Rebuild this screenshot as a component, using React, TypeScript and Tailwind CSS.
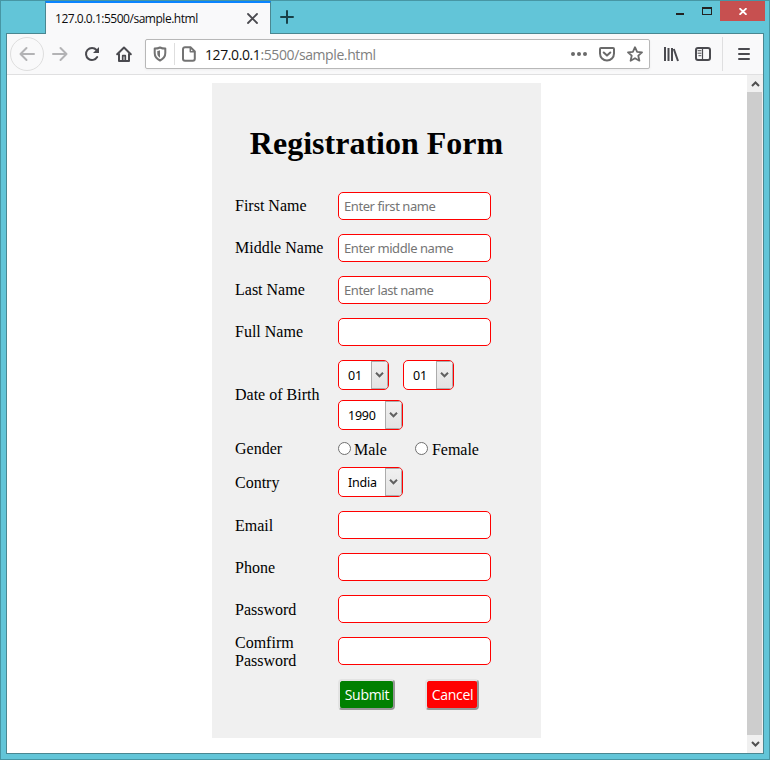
import type { ReactNode } from "react";

const UI = "font-['Open_Sans','Noto_Sans',sans-serif]";

function Row({ label, height = "h-[42px]", shift = "", children }: { label: string; height?: string; shift?: string; children: ReactNode }) {
  return (
    <div className={`flex items-center ${height}`}>
      <div className={`w-[103px] shrink-0 pr-2 leading-[18px] ${shift}`}>{label}</div>
      {children}
    </div>
  );
}

function Field({ placeholder = "" }: { placeholder?: string }) {
  return (
    <input
      placeholder={placeholder}
      className="h-7 w-[153px] rounded-[5px] border border-[#ff0000] bg-white px-[5px] font-['Noto_Sans',sans-serif] text-[13px] tracking-[-0.430px] outline-none placeholder:text-[#757575]"
    />
  );
}

function Select({ value, width }: { value: string; width: string }) {
  return (
    <div className={`flex h-[30px] ${width} items-stretch overflow-hidden rounded-[5px] border border-[#ff0000] bg-white text-black`}>
      <span className="flex-1 pl-[9px] pt-px font-['Noto_Sans',sans-serif] text-[12.5px] leading-[28px] tracking-[-0.25px]">{value}</span>
      <span className="flex w-[17px] items-center justify-center border border-[#acacac] bg-linear-to-b from-[#f0f0f0] to-[#e3e3e3]">
        <svg width="9" height="6" viewBox="0 0 9 6" fill="none" stroke="#606060" strokeWidth="2"><path d="M1 .8 4.5 4.3 8 .8" /></svg>
      </span>
    </div>
  );
}

function Radio({ label, gap }: { label: string; gap: string }) {
  return (
    <label className="flex items-center">
      <span className={`mb-px ${gap} block size-[13px] rounded-full border border-[#707070] bg-white`} />
      <span className="mt-px leading-[18px]">{label}</span>
    </label>
  );
}

const line = { fill: "none", stroke: "#4a4a4f", strokeWidth: 2, strokeLinecap: "round", strokeLinejoin: "round" } as const;

function Toolbar() {
  return (
    <div className="flex h-[41px] shrink-0 items-center border-b border-[#e0e0e1] bg-[#f9f9fa]">
      <div className="ml-[3px] flex size-[34px] items-center justify-center rounded-full border border-[#dedede]">
        <svg width="16" height="16" viewBox="0 0 16 16" {...line} stroke="#b3b3b5"><path d="M15 8H1.5M7.5 2 1.5 8l6 6" /></svg>
      </div>
      <svg className="ml-2" width="16" height="16" viewBox="0 0 16 16" {...line} stroke="#b3b3b5"><path d="M1 8h13.5M8.500 2l6 6-6 6" /></svg>
      <svg className="ml-4" width="16" height="16" viewBox="0 0 16 16" {...line}><path d="M13.200 11A6 6 0 1 1 12.500 4" /><path d="M15 1v6H9z" fill="#4a4a4f" stroke="none" /></svg>
      <svg className="ml-4" width="16" height="16" viewBox="0 0 16 16" {...line}><path d="M1.200 8.200 8 1.500l6.800 6.700M3 7.500V15h10V7.500" /><path d="M6.700 14V9.700h2.600V14" strokeWidth="1.700" /></svg>
      <div className="ml-[13px] flex h-[30px] w-[505px] items-center rounded-[2px] border border-[#b8b8b8] bg-white shadow-[0_1px_3px_#0000000d]">
        <svg className="ml-[6px]" width="16" height="16" viewBox="0 0 16 16" fill="none" stroke="#737373" strokeWidth="2" strokeLinejoin="round"><path d="M8 1.500c1.700.8 3.500 1.100 5.300 1.100v4.400c0 3.600-1.600 5.800-5.300 7.500-3.700-1.700-5.300-3.900-5.300-7.500v-4.400C4.500 2.600 6.300 2.300 8 1.500Z" /><path d="M8 4.300C7.300 4.800 6.400 5 5.300 5.100v2.100c0 2 .8 3.400 2.700 4.500Z" fill="#737373" stroke="none" /></svg>
        <span className="ml-[6px] h-[22px] w-px bg-[#dedede]" />
        <svg className="ml-[6px]" width="16" height="16" viewBox="0 0 16 16" {...line} stroke="#737373"><path d="M4 1.200h5.500l4.300 4.300v7.300a2 2 0 0 1-2 2H4a2 2 0 0 1-2-2V3.200a2 2 0 0 1 2-2Z" /><path d="M9.300 1.500v4.200h4.200" strokeWidth="1.500" /></svg>
        <span className={`ml-[8px] mt-[2px] ${UI} text-[14px] leading-5 tracking-[-0.400px] text-[#808080]`}><span className="text-[#111]">127.0.0.1</span>:5500/sample.html</span>
        <svg className="ml-auto" width="16" height="16" viewBox="0 0 16 16" fill="#6a6a6a"><circle cx="2" cy="8" r="2" /><circle cx="8" cy="8" r="2" /><circle cx="14" cy="8" r="2" /></svg>
        <svg className="ml-3" width="16" height="16" viewBox="0 0 16 16" {...line} stroke="#6a6a6a"><path d="M2 2h12a1 1 0 0 1 1 1v4.500a7 7 0 0 1-14 0V3a1 1 0 0 1 1-1Z" /><path d="M4.700 6.500 8 9.600l3.300-3.100" /></svg>
        <svg className="ml-3 mr-[6px]" width="16" height="16" viewBox="0 0 16 16" {...line} stroke="#6a6a6a" strokeWidth="1.800"><path d="m8 1.200 2.100 4.600 4.900.5-3.700 3.400 1.100 5L8 12.200l-4.400 2.500 1.100-5L1 6.300l4.900-.5Z" /></svg>
      </div>
      <svg className="ml-[13px]" width="16" height="16" viewBox="0 0 16 16" {...line}><path d="M2 1v14M5.500 2v13M9 2v13M10.800 3l4.200 12" strokeLinecap="butt" /></svg>
      <svg className="ml-4" width="16" height="16" viewBox="0 0 16 16" {...line}><rect x="1" y="2" width="14" height="12" rx="2" /><path d="M7.500 2v12" strokeWidth="1.200" /><path d="M3 4.700h3M3 7.200h3M3.800 9.700H6" strokeWidth="1" /></svg>
      <span className="ml-[11px] h-[34px] w-px bg-[#dfdfe0]" />
      <svg className="ml-[13px]" width="16" height="16" viewBox="0 0 16 16" {...line}><path d="M3 3h10M3 8h10M3 13h10" /></svg>
    </div>
  );
}

export default function App() {
  return (
    <div className="flex h-[760px] w-[770px] flex-col overflow-hidden border border-[#4796a4] bg-[#62c5d8]">
      <div className="flex h-8 shrink-0 items-start pl-11">
        <div className={`z-10 flex h-[33px] w-[226px] items-center justify-between border-x border-t-2 border-x-[#4a8791] border-t-[#0a84ff] bg-[#f9f9fa] pl-[9px] pr-3 ${UI} text-xs tracking-[-0.480px] text-[#0c0c0d]`}>
          <span className="mt-px">127.0.0.1:5500/sample.html</span>
          <svg width="11" height="11" viewBox="0 0 11 11" stroke="#4a4a4f" strokeWidth="1.800" strokeLinecap="round"><path d="m1 1 9 9m0-9-9 9" /></svg>
        </div>
        <svg className="ml-[9px] mt-[9px]" width="14" height="14" viewBox="0 0 14 14" stroke="#184047" strokeWidth="2" strokeLinecap="round"><path d="M7 1v12M1 7h12" /></svg>
        <div className="ml-auto mr-1 flex">
          <span className="mr-[18px] mt-3 h-[2px] w-2 bg-[#222]" />
          <span className="mr-2 mt-[6px] h-2 w-[10px] border border-t-2 border-[#222]" />
          <span className="flex h-5 w-[45px] items-center justify-center bg-[#c75050]">
            <svg width="8" height="7" viewBox="0 0 8 7" stroke="white" strokeWidth="1.800"><path d="m.5.200 7 6.600m0-6.600-7 6.600" /></svg>
          </span>
        </div>
      </div>
      <div className="mb-[5px] ml-[5px] mr-[5px] flex min-h-0 flex-1 flex-col border border-[#4a8791] bg-white">
        <Toolbar />
        <div className="flex min-h-0 flex-1">
          <div className="flex-1 pl-[205px] pt-2">
            <form className="h-[655px] w-[329px] bg-[#f0f0f0] pl-[23px] font-['Liberation_Serif',serif] text-base text-black">
              <h1 className="-ml-[23px] h-[102px] pt-[42px] text-center text-[32px] font-bold leading-9">Registration Form</h1>
              <Row label="First Name"><Field placeholder="Enter first name" /></Row>
              <Row label="Middle Name"><Field placeholder="Enter middle name" /></Row>
              <Row label="Last Name"><Field placeholder="Enter last name" /></Row>
              <Row label="Full Name"><Field /></Row>
              <Row label="Date of Birth" height="h-[84px]">
                <div className="flex w-[153px] flex-wrap gap-x-[14px] gap-y-[10px]">
                  <Select value="01" width="w-[51px]" />
                  <Select value="01" width="w-[51px]" />
                  <Select value="1990" width="w-[65px]" />
                </div>
              </Row>
              <Row label="Gender" height="h-6">
                <div className="flex gap-[28px]"><Radio label="Male" gap="mr-[3px]" /><Radio label="Female" gap="mr-1" /></div>
              </Row>
              <Row label="Contry" height="h-[42px]" shift="pt-px"><Select value="India" width="w-[65px]" /></Row>
              <div className="pt-px">
                <Row label="Email" shift="pt-[2px]"><Field /></Row>
                <Row label="Phone" shift="pt-[2px]"><Field /></Row>
                <Row label="Password" shift="pt-[2px]"><Field /></Row>
                <Row label="Comfirm Password" shift="pt-[2px]"><Field /></Row>
              </div>
              <div className={`flex gap-[30px] pl-[103px] pt-[7px] ${UI} text-sm tracking-[-0.300px] text-white`}>
                <button type="button" className="h-[31px] w-[57px] rounded-[4px] border-2 border-b-[#969696] border-l-[#e3e3e3] border-r-[#969696] border-t-[#e3e3e3] bg-[#008000] pl-px leading-none">Submit</button>
                <button type="button" className="h-[31px] w-[54px] rounded-[4px] border-2 border-b-[#969696] border-l-[#e3e3e3] border-r-[#969696] border-t-[#e3e3e3] bg-[#ff0000] pl-px leading-none">Cancel</button>
              </div>
            </form>
          </div>
          <div className="flex w-4 flex-col bg-[#f0f0f0]">
            <span className="flex h-[17px] items-center justify-center"><svg width="9" height="6" viewBox="0 0 9 6" fill="none" stroke="#505050" strokeWidth="2"><path d="M1 5 4.500 1.500 8 5" /></svg></span>
            <span className="mr-px flex-1 bg-[#cdcdcd]" />
            <span className="flex h-[18px] items-center justify-center"><svg width="9" height="6" viewBox="0 0 9 6" fill="none" stroke="#505050" strokeWidth="2"><path d="M1 1 4.500 4.500 8 1" /></svg></span>
          </div>
        </div>
      </div>
    </div>
  );
}
